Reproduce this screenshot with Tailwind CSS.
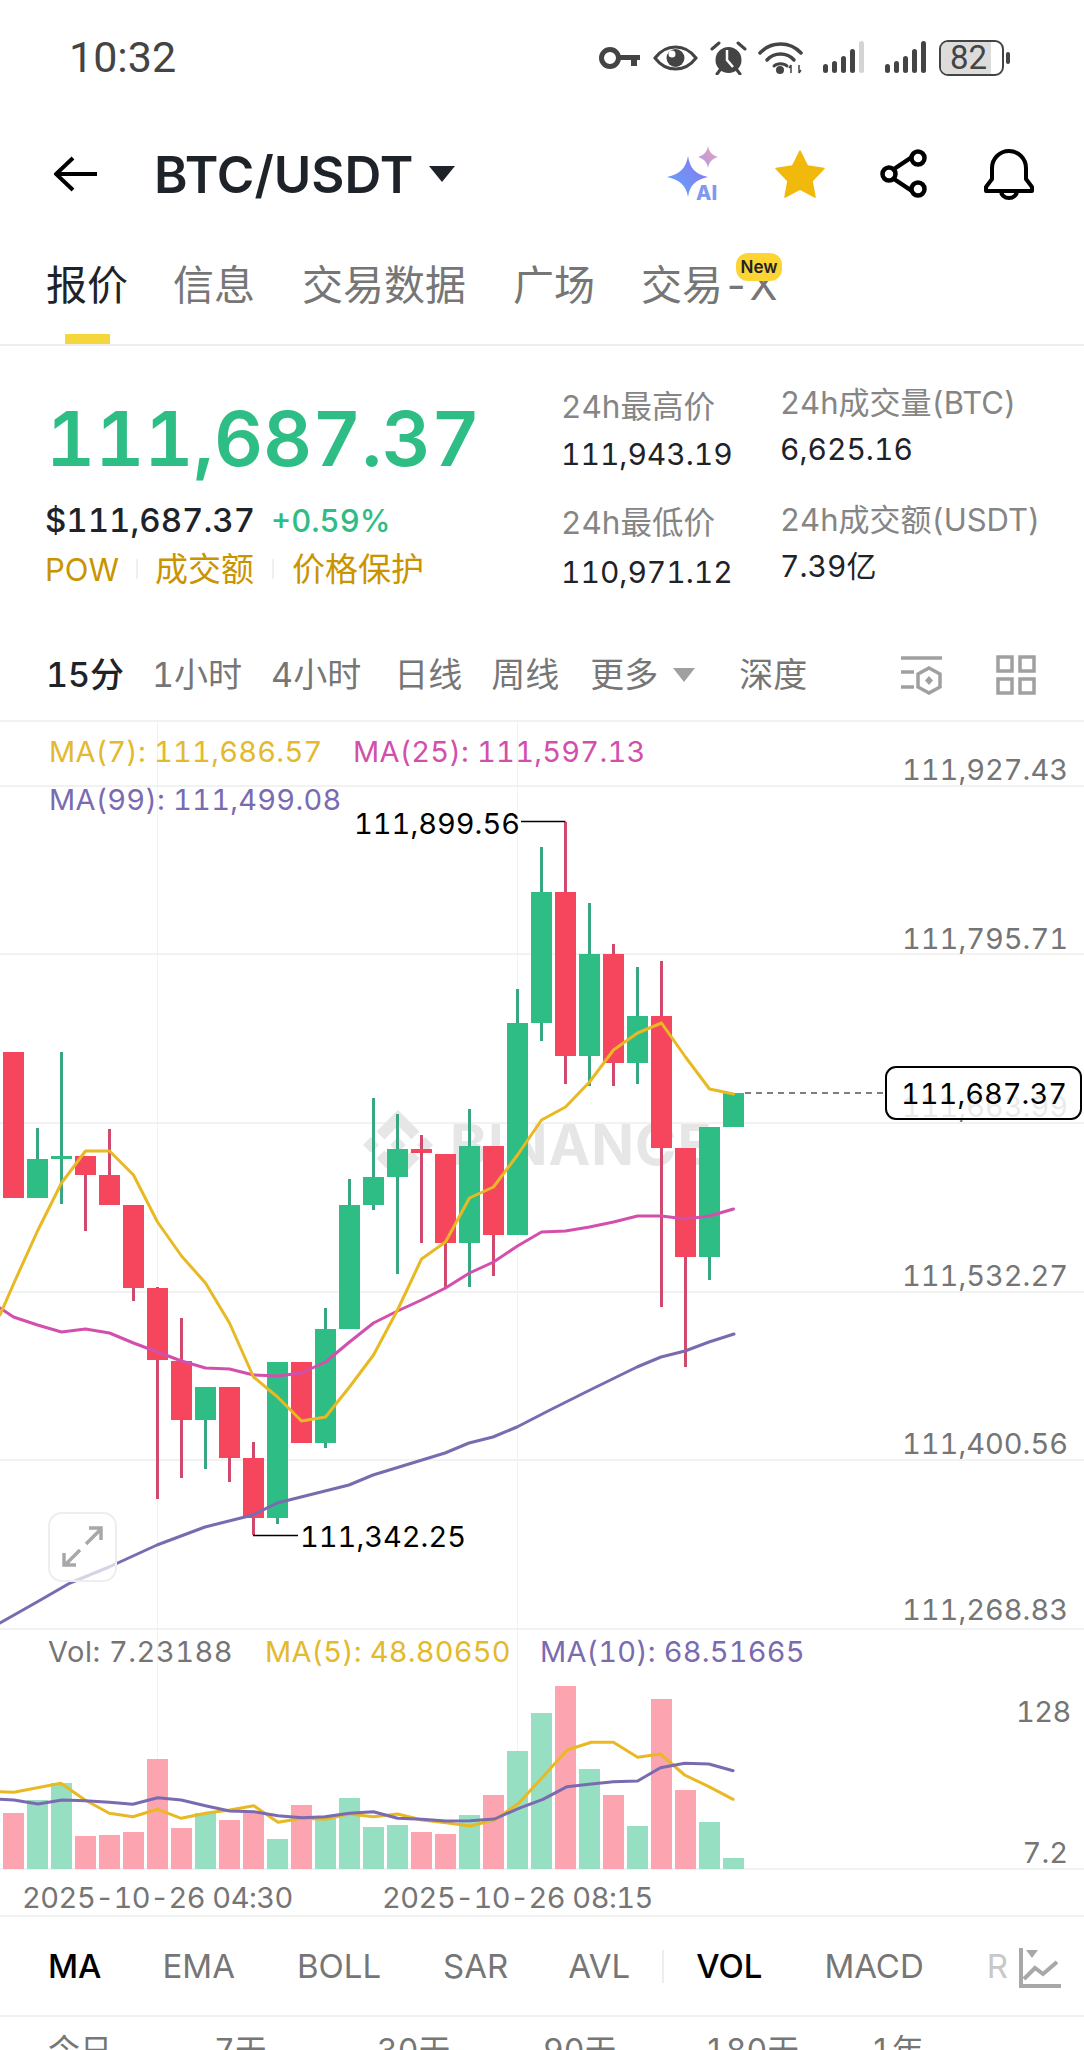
<!DOCTYPE html>
<html lang="zh-CN">
<head>
  <meta charset="UTF-8">
  <meta name="viewport" content="width=device-width, initial-scale=1.0">
  <title>BTC/USDT</title>
  <script src="https://cdn.jsdelivr.net/npm/@tailwindcss/browser@4"></script>
</head>
<body class="bg-white w-[1084px] h-[2050px] overflow-hidden tabular-nums font-['Inter','Noto_Sans_CJK_SC',sans-serif]">

  <!-- status bar -->
  <div class="h-[115px] flex items-center justify-between pl-[69px] pr-[74px] text-[#444]">
    <span class="font-['Roboto'] text-[43px] leading-none">10:32</span>
    <div class="flex items-center">
      <svg width="41" height="22" viewBox="0 0 41 22" class="mr-[13px]"><circle cx="11" cy="11" r="8.5" fill="none" stroke="#444" stroke-width="5"/><path d="M19 8h22v5h-3v6h-6v-6H19z" fill="#444"/></svg>
      <svg width="45" height="26" viewBox="0 0 45 26" class="mr-[12px]"><path d="M2 13C8 5 15 2 22.500 2S37 5 43 13C37 21 30 24 22.500 24S8 21 2 13Z" fill="none" stroke="#444" stroke-width="3"/><circle cx="22.500" cy="13" r="9" fill="#444"/><circle cx="19" cy="9" r="3.500" fill="#fff"/></svg>
      <svg width="37" height="34" viewBox="0 0 37 34" class="mr-[11px]"><circle cx="18.500" cy="19" r="13" fill="#444"/><path d="M17 9v10l6 7" fill="none" stroke="#fff" stroke-width="2.500"/><path d="M2 8l7-6M35 8l-7-6M7 33l3-4M30 33l-3-4" stroke="#444" stroke-width="3" stroke-linecap="round"/></svg>
      <svg width="45" height="34" viewBox="0 0 45 34" class="mr-[19px]"><path d="M2 12C13 0 32 0 43 12" fill="none" stroke="#444" stroke-width="3.500" stroke-linecap="round"/><path d="M9 19C16 11 29 11 36 19" fill="none" stroke="#444" stroke-width="3.500" stroke-linecap="round"/><path d="M16 25C19 22 26 22 29 25" fill="none" stroke="#444" stroke-width="3" stroke-linecap="round"/><circle cx="22" cy="29" r="4" fill="#444"/><path d="M33 24v8M31 27l2-3M41 24v8M43 29l-2 3" stroke="#444" stroke-width="1.500" fill="none"/></svg>
      <svg width="42" height="33" viewBox="0 0 42 33" class="mr-[20px]"><rect x="1" y="23" width="5" height="9" rx="2.500" fill="#444"/><rect x="10" y="20" width="5" height="12" rx="2.500" fill="#444"/><rect x="19" y="15" width="5" height="17" rx="2.500" fill="#444"/><rect x="28" y="8" width="5" height="24" rx="2.500" fill="#444"/><rect x="37" y="0" width="5" height="32" rx="2.500" fill="#d4d4d4"/></svg>
      <svg width="42" height="33" viewBox="0 0 42 33" class="mr-[13px]"><rect x="1" y="23" width="5" height="9" rx="2.500" fill="#444"/><rect x="10" y="20" width="5" height="12" rx="2.500" fill="#444"/><rect x="19" y="15" width="5" height="17" rx="2.500" fill="#444"/><rect x="28" y="8" width="5" height="24" rx="2.500" fill="#444"/><rect x="37" y="0" width="5" height="32" rx="2.500" fill="#444"/></svg>
      <div class="relative w-[65px] h-[36px] rounded-[9px] border-[2.5px] border-[#444] overflow-hidden flex items-center justify-center font-['Roboto'] text-[33px] leading-none text-[#444]">
        <div class="absolute left-0 top-0 bottom-0 w-[82%] bg-[#dcdcdc]"></div>
        <span class="relative pr-[6px]">82</span>
      </div>
      <div class="w-[4px] h-[12px] rounded-full bg-[#444] ml-[2px]"></div>
    </div>
  </div>

  <!-- header -->
  <div class="h-[118px] flex items-center pl-[54px] relative">
    <svg width="44" height="36" viewBox="0 0 44 36" class="mr-[56px]"><path d="M43 18H3M19 2L2 18l17 16" fill="none" stroke="#000" stroke-width="4"/></svg>
    <span class="text-[51px] font-semibold leading-none text-[#1e2329]">BTC/USDT</span>
    <svg width="26" height="16" viewBox="0 0 26 16" class="ml-[16px]"><path d="M0 0h26L13 16z" fill="#1e2329"/></svg>
    <div class="ml-auto flex items-center pr-[50px]">
      <svg width="56" height="56" viewBox="0 0 56 56" class="mr-[52px]">
        <defs>
          <linearGradient id="aiStar" x1="0" y1="1" x2="1" y2="0"><stop offset="0" stop-color="#5fa8f8"/><stop offset="1" stop-color="#8a74f0"/></linearGradient>
          <linearGradient id="aiSmall" x1="0" y1="1" x2="1" y2="0"><stop offset="0" stop-color="#a99af0"/><stop offset="1" stop-color="#f0a0b0"/></linearGradient>
        </defs>
        <path d="M21 10C23 22 28 28 41 31C28 34 23 39 21 51C19 39 13 34 0 31C13 28 19 22 21 10Z" fill="url(#aiStar)"/>
        <path d="M41 0C42 6 45 9 51 11C45 13 42 16 41 22C40 16 37 13 31 11C37 9 40 6 41 0Z" fill="url(#aiSmall)"/>
        <text x="29" y="54" font-size="20" font-weight="800" fill="#8098ee" font-family="Inter">AI</text>
      </svg>
      <svg width="50" height="48" viewBox="0 0 50 48" class="mr-[55px]"><path d="M25 1l7.500 15 16.500 2.500-12 12.500 3 16-15-8-15 8 3-16L1 18.500l16.500-2.500z" fill="#f0b90b" stroke="#f0b90b" stroke-width="1.500" stroke-linejoin="round"/></svg>
      <svg width="50" height="50" viewBox="0 0 50 50" class="mr-[54px]"><path d="M14 20l18-12M14 30l18 12" stroke="#000" stroke-width="4.500"/><circle cx="9" cy="25" r="6.500" fill="#fff" stroke="#000" stroke-width="4.500"/><circle cx="38" cy="9" r="6.500" fill="#fff" stroke="#000" stroke-width="4.500"/><circle cx="38" cy="40" r="6.500" fill="#fff" stroke="#000" stroke-width="4.500"/></svg>
      <svg width="50" height="52" viewBox="0 0 50 52"><path d="M8 31V20A17 17 0 0 1 42 20V31L48 39V43H2V39Z" fill="none" stroke="#000" stroke-width="4" stroke-linejoin="round"/><path d="M17 43a8 7 0 0 0 16 0" fill="none" stroke="#000" stroke-width="4"/></svg>
    </div>
  </div>

  <!-- tabs -->
  <div class="h-[113px] border-b-2 border-[#eeeeee] flex items-center pl-[46px] text-[41px] leading-none text-[#767676] pb-[6px]">
    <div class="relative text-[#1e2329] mr-[45px]">报价
      <div class="absolute left-[19px] top-[69px] w-[45px] h-[10px] bg-[#f5d63d]"></div>
    </div>
    <div class="mr-[47px]">信息</div>
    <div class="mr-[47px]">交易数据</div>
    <div class="mr-[46px]">广场</div>
    <div class="relative">交易-X
      <div class="absolute left-[95px] top-[-12px] w-[46px] h-[28px] rounded-[12px] bg-[#fcd535] flex items-center justify-center text-[17px] font-semibold text-[#1e2329]">New</div>
    </div>
  </div>

  <!-- price stats -->
  <div class="h-[274px] flex">
    <div class="w-[561px] pl-[46px] pt-[52px]">
      <div class="h-[80px] flex items-center text-[76px] font-semibold leading-none text-[#2ebd85]">111,687.37</div>
      <div class="h-[40px] mt-[22px] -ml-[1px] flex items-center text-[33px] leading-none">
        <span class="text-[#1e2329] font-medium">$111,687.37</span>
        <span class="ml-[16px] text-[#2ebd85] font-medium text-[31px]">+0.59%</span>
      </div>
      <div class="h-[40px] mt-[9px] -ml-[1px] flex items-center text-[33px] leading-none text-[#c99400]">
        <span class="text-[31px]">POW</span>
        <span class="w-[2px] h-[20px] bg-[#f0f0f0] mx-[17px]"></span>
        <span>成交额</span>
        <span class="w-[2px] h-[20px] bg-[#f0f0f0] mx-[18px]"></span>
        <span>价格保护</span>
      </div>
    </div>
    <div class="w-[219px] pt-[41px] text-[#1e2329]">
      <div class="h-[40px] flex items-center text-[31.5px] text-[#858585]">24h最高价</div>
      <div class="h-[40px] mt-[7px] flex items-center text-[30px]">111,943.19</div>
      <div class="h-[40px] mt-[29px] flex items-center text-[31.5px] text-[#858585]">24h最低价</div>
      <div class="h-[40px] mt-[9px] flex items-center text-[30px]">110,971.12</div>
    </div>
    <div class="pt-[37px] text-[#1e2329]">
      <div class="h-[40px] flex items-center text-[31px] text-[#858585]">24h成交量(BTC)</div>
      <div class="h-[40px] mt-[6px] flex items-center text-[30px]">6,625.16</div>
      <div class="h-[40px] mt-[31px] flex items-center text-[31px] text-[#858585]">24h成交额(USDT)</div>
      <div class="h-[40px] mt-[6px] flex items-center text-[30px]">7.39亿</div>
    </div>
  </div>

  <!-- time frames -->
  <div class="h-[100px] pt-[10px] pl-[46px] flex items-center text-[34px] leading-none text-[#767676]">
    <span class="text-[#1e2329] font-medium mr-[28px]">15分</span>
    <span class="mr-[29px]">1小时</span>
    <span class="mr-[33px]">4小时</span>
    <span class="mr-[29px]">日线</span>
    <span class="mr-[31px]">周线</span>
    <span class="mr-[15px]">更多</span>
    <svg width="22" height="14" viewBox="0 0 22 14" class="mr-[44px]"><path d="M0 0h22L11 14z" fill="#a0a0a0"/></svg>
    <span>深度</span>
    <svg width="44" height="40" viewBox="0 0 44 40" class="ml-auto mr-[52px]"><path d="M1 3h41M1 17h13M1 32h13" stroke="#a0a0a0" stroke-width="3.500"/><path d="M29 13l11 6v13l-11 6-11-6V19z" fill="none" stroke="#a0a0a0" stroke-width="3.500"/><path d="M29 21l4 4.500-4 4.500-4-4.500z" fill="#a0a0a0"/></svg>
    <svg width="40" height="40" viewBox="0 0 40 40" class="mr-[48px]"><rect x="2" y="2" width="14" height="14" fill="none" stroke="#a0a0a0" stroke-width="3.500"/><rect x="24" y="2" width="14" height="14" fill="none" stroke="#a0a0a0" stroke-width="3.500"/><rect x="2" y="24" width="14" height="14" fill="none" stroke="#a0a0a0" stroke-width="3.500"/><rect x="24" y="24" width="14" height="14" fill="none" stroke="#a0a0a0" stroke-width="3.500"/></svg>
  </div>

  <!-- chart, coordinates are page y minus 720 -->
  <div class="relative h-[1197px] text-[29px] leading-none whitespace-nowrap">
    <svg id="chart" class="absolute inset-0" width="1084" height="1197" viewBox="0 720 1084 1197"></svg>

    <div class="absolute left-[49px] top-[17px] tracking-[0.25px] text-[#e3b92d]">MA(7): 111,686.57</div>
    <div class="absolute left-[353px] top-[17px] tracking-[0.25px] text-[#d24fac]">MA(25): 111,597.13</div>
    <div class="absolute left-[49px] top-[65px] tracking-[0.25px] text-[#7a6bb0]">MA(99): 111,499.08</div>

    <div class="absolute right-[16px] top-[35px] text-[#757575]">111,927.43</div>
    <div class="absolute right-[16px] top-[204px] text-[#757575]">111,795.71</div>
    <div class="absolute right-[16px] top-[372px] text-[#757575]">111,663.99</div>
    <div class="absolute right-[16px] top-[541px] text-[#757575]">111,532.27</div>
    <div class="absolute right-[16px] top-[709px] text-[#757575]">111,400.56</div>
    <div class="absolute right-[16px] top-[875px] text-[#757575]">111,268.83</div>

    <div class="absolute left-[354px] top-[89px] text-black">111,899.56</div>
    <div class="absolute left-[300px] top-[802px] text-black">111,342.25</div>

    <div class="absolute left-[885px] top-[346px] w-[197px] h-[54px] rounded-[11px] border-2 border-black bg-white/85 flex items-center justify-end pr-[13px] text-black">111,687.37</div>

    <div class="absolute left-[48px] top-[792px] w-[69px] h-[70px] rounded-[14px] border-2 border-[#eeeeee] bg-white/70 flex items-center justify-center">
      <svg width="44" height="44" viewBox="0 0 44 44"><path d="M25 19L40 4M28 3h12v12M19 25L4 40M3 28v12h12" fill="none" stroke="#a8a8a8" stroke-width="3.500"/></svg>
    </div>

    <div class="absolute left-[48px] top-[917px] tracking-[0.5px] text-[#757575]">Vol: 7.23188</div>
    <div class="absolute left-[265px] top-[917px] tracking-[0.2px] text-[#e3b92d]">MA(5): 48.80650</div>
    <div class="absolute left-[540px] top-[917px] tracking-[0.2px] text-[#7a6bb0]">MA(10): 68.51665</div>

    <div class="absolute left-[1016px] top-[977px] tracking-[-0.5px] text-[#757575]">128</div>
    <div class="absolute right-[16px] top-[1118px] text-[#757575]">7.2</div>

    <div class="absolute left-[22px] top-[1163px] tracking-[-0.5px] text-[#757575]">2025-10-26 04:30</div>
    <div class="absolute left-[382px] top-[1163px] tracking-[-0.5px] text-[#757575]">2025-10-26 08:15</div>
  </div>

  <!-- indicators -->
  <div class="relative h-[100px] border-b-2 border-[#f0f0f0] flex items-center pl-[48px] text-[33px] leading-none text-[#767676] overflow-hidden">
    <span class="text-black font-medium mr-[61px]">MA</span>
    <span class="mr-[62px]">EMA</span>
    <span class="mr-[62px]">BOLL</span>
    <span class="mr-[60px]">SAR</span>
    <span class="mr-[32px]">AVL</span>
    <span class="w-[2px] h-[33px] bg-[#eeeeee] mr-[32px]"></span>
    <span class="text-black font-medium mr-[62px]">VOL</span>
    <span class="mr-[63px]">MACD</span>
    <span class="text-[#c8c8c8]">R</span>
    <svg width="42" height="42" viewBox="0 0 42 42" class="absolute left-[1019px] top-[30px]"><path d="M2 1v38h40" fill="none" stroke="#a8a8a8" stroke-width="4"/><path d="M7 3h12l-6 8z" fill="#a8a8a8"/><path d="M5 32l11-11 8 6 14-12" fill="none" stroke="#a8a8a8" stroke-width="4"/></svg>
  </div>

  <!-- ranges, cut off by the window -->
  <div class="flex pl-[48px] pt-[18px] text-[32px] leading-none text-[#767676]">
    <span class="w-[166px]">今日</span>
    <span class="w-[163px]">7天</span>
    <span class="w-[166px]">30天</span>
    <span class="w-[162px]">90天</span>
    <span class="w-[166px]">180天</span>
    <span>1年</span>
  </div>

  <script>
    const GREEN = '#2ebd85', RED = '#f6465d';
    const WICK_G = '#3aa582', WICK_R = '#cf4a6c';

    // [color, body top, body bottom, wick top, wick bottom]
    const candles = [
      ['r',1052,1198,1052,1198],['g',1159,1198,1128,1198],['g',1156,1159,1052,1204],['r',1156,1175,1156,1231],
      ['r',1175,1205,1129,1205],['r',1205,1288,1205,1301],['r',1288,1360,1287,1499],['r',1361,1420,1318,1478],
      ['g',1387,1420,1387,1469],['r',1387,1458,1387,1482],['r',1458,1518,1442,1535],['g',1362,1518,1362,1524],
      ['r',1362,1443,1362,1443],['g',1329,1443,1308,1448],['g',1205,1329,1179,1329],['g',1177,1205,1098,1210],
      ['g',1149,1177,1114,1274],['r',1149,1153,1135,1243],['r',1154,1243,1154,1288],['g',1146,1243,1109,1287],
      ['r',1146,1235,1146,1276],['g',1023,1235,989,1235],['g',892,1023,847,1041],['r',892,1056,822,1084],
      ['g',954,1056,903,1086],['r',954,1063,944,1086],['g',1016,1063,967,1084],['r',1016,1148,961,1307],
      ['r',1148,1257,1148,1367],['g',1127,1257,1127,1280],['g',1093,1127,1093,1127]
    ];

    // bar top per candle, bars stand on y=1869
    const volumes = [1813,1800,1783,1836,1835,1832,1759,1828,1813,1820,1813,1839,1805,1818,1798,1827,1825,1832,1834,1815,1795,1751,1713,1686,1769,1795,1826,1699,1790,1822,1858];

    const cx = i => 13.5 + 24 * i;
    const ma7 = [1284,1231,1183,1151,1151,1175,1222,1256,1283,1323,1377,1397,1421,1417,1387,1355,1310,1259,1242,1198,1187,1155,1120,1107,1082,1050,1033,1023,1057,1089,1094];
    const ma25 = [1317,1325,1332,1329,1333,1343,1352,1361,1368,1369,1375,1376,1373,1362,1342,1323,1311,1300,1288,1273,1262,1246,1232,1231,1227,1222,1216,1216,1219,1216,1209];
    const ma99 = '0,1623 37,1602 70,1583 109,1567 157,1545 205,1527 253,1515 277,1503 301,1497 349,1485 373,1475 445,1453 469,1443 493,1437 517,1427 550,1410 564,1403 590,1390 637,1367 661,1357 685,1351 709,1342 734,1334';

    const volMa5 = [[0,455],[20,457],[88,430],[123,480],[158,520],[192,530],[228,508],[262,535],[297,520],[332,510],[367,497],[402,547],[437,535],[470,538],[505,522],[540,530],[575,522],[610,540],[645,548],[680,558],[715,540],[750,490],[785,410],[820,330],[855,307],[887,307],[922,352],[955,342],[990,405],[1025,440],[1060,478]];
    const volMa10 = [[0,478],[20,480],[55,492],[90,480],[123,482],[158,487],[192,493],[228,473],[262,480],[297,497],[332,513],[367,515],[402,527],[437,533],[470,530],[505,520],[540,515],[575,535],[610,538],[645,543],[680,542],[715,537],[750,505],[785,478],[820,440],[855,432],[887,425],[922,423],[955,383],[990,370],[1025,372],[1060,392]];

    const line = (pts, color, w) => `<polyline points="${pts}" fill="none" stroke="${color}" stroke-width="${w}" stroke-linejoin="round" stroke-linecap="round"/>`;
    const series = arr => arr.map((y, i) => cx(i) + ',' + y).join(' ');
    // those two were read off a zoomed crop, 1.446x wide and 3x high
    const fromCrop = arr => arr.map(p => (p[0] / 1.446).toFixed(1) + ',' + (1640 + p[1] / 3).toFixed(1)).join(' ');

    let out = '';

    // grid
    [720, 785, 953, 1122, 1291, 1459, 1628, 1868, 1915].forEach(y => {
      out += `<rect x="0" y="${y}" width="1084" height="2" fill="#f2f2f2"/>`;
    });
    [157, 517].forEach(x => {
      out += `<rect x="${x}" y="722" width="1" height="1147" fill="#f2f2f2"/>`;
    });

    // watermark
    out += `<svg x="363" y="1110" width="70" height="70" viewBox="0 0 24 24"><path fill="#e6e6e6" d="M16.624 13.9202l2.7175 2.7154-7.353 7.353-7.353-7.352 2.7175-2.7164 4.6355 4.6595 4.6356-4.6595zm4.6366-4.6366L24 12l-2.7154 2.7164L18.5682 12l2.6924-2.7164zm-9.272.001l2.7163 2.6914-2.7164 2.7174v-.001L9.2721 12l2.7164-2.7154zm-9.2722-.001L5.4088 12l-2.6914 2.6924L0 12l2.7164-2.7164zM11.9885.0115l7.353 7.329-2.7174 2.7154-4.6356-4.6356-4.6355 4.6595-2.7174-2.7154 7.353-7.353z"/></svg>`;
    out += `<text x="450" y="1165" font-family="Inter" font-size="56" font-weight="700" letter-spacing="1" fill="#e6e6e6">BINANCE</text>`;

    // candles
    candles.forEach((c, i) => {
      const green = c[0] === 'g';
      out += `<rect x="${cx(i) - 1.5}" y="${c[3]}" width="3" height="${c[4] - c[3]}" fill="${green ? WICK_G : WICK_R}"/>`;
      out += `<rect x="${cx(i) - 10.5}" y="${c[1]}" width="21" height="${c[2] - c[1]}" fill="${green ? GREEN : RED}"/>`;
    });

    // high, low and last price markers
    out += '<path d="M521 821.5H565.500" stroke="#000" stroke-width="1.500"/>';
    out += '<path d="M253 1535.500H298" stroke="#000" stroke-width="1.500"/>';
    out += '<path d="M745 1093H885" stroke="#555" stroke-width="1.500" stroke-dasharray="6 5"/>';

    out += line(ma99, '#7a6bb0', 3);
    out += line('0,1308 ' + series(ma25), '#d24fac', 3);
    out += line('0,1315 ' + series(ma7), '#e8b923', 3);

    // volume
    volumes.forEach((top, i) => {
      const green = candles[i][0] === 'g';
      out += `<rect x="${cx(i) - 10.5}" y="${top}" width="21" height="${1869 - top}" fill="${green ? '#96dfc3' : '#fda4b1'}"/>`;
    });
    out += line(fromCrop(volMa5), '#e8b923', 3);
    out += line(fromCrop(volMa10), '#7a6bb0', 3);

    document.getElementById('chart').innerHTML = out;
  </script>
</body>
</html>
